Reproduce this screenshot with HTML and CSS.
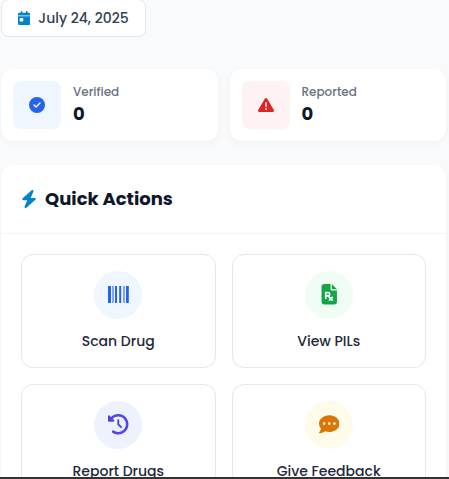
FILE: index.html
```html
<!DOCTYPE html>
<html lang="en">
<head>
<meta charset="utf-8">
<title>Dashboard</title>
<link rel="stylesheet" href="styles.css">
</head>
<body>
<main class="page">
  <div class="date">
    <svg class="date-icon" viewBox="0 0 448 512"><path d="M128 0c17.7 0 32 14.3 32 32V64H288V32c0-17.7 14.3-32 32-32s32 14.3 32 32V64h48c26.5 0 48 21.5 48 48v48H0V112C0 85.500 21.500 64 48 64H96V32c0-17.700 14.300-32 32-32zM0 192H448V464c0 26.500-21.500 48-48 48H48c-26.500 0-48-21.500-48-48V192zm80 64c-8.800 0-16 7.200-16 16v96c0 8.800 7.200 16 16 16h96c8.800 0 16-7.200 16-16V272c0-8.800-7.200-16-16-16H80z"/></svg>
    <span>July 24, 2025</span>
  </div>
  <section class="stats">
    <div class="stat">
      <div class="stat-icon blue"><svg viewBox="0 0 512 512"><path d="M256 512A256 256 0 1 0 256 0a256 256 0 1 0 0 512zM369 209L241 337c-9.400 9.400-24.600 9.400-33.900 0l-64-64c-9.400-9.400-9.400-24.600 0-33.900s24.600-9.400 33.900 0l47 47L335 175c9.400-9.400 24.600-9.400 33.900 0s9.400 24.600 0 33.900z"/></svg></div>
      <div class="stat-text"><span class="label">Verified</span><strong>0</strong></div>
    </div>
    <div class="stat">
      <div class="stat-icon red"><svg viewBox="0 0 512 512"><path d="M256 32c14.200 0 27.300 7.500 34.500 19.800l216 368c7.300 12.400 7.300 27.700 .2 40.100S486.300 480 472 480H40c-14.300 0-27.600-7.700-34.700-20.100s-7-27.800 .2-40.100l216-368C228.700 39.500 241.800 32 256 32zm0 128c-13.300 0-24 10.700-24 24V296c0 13.300 10.700 24 24 24s24-10.700 24-24V184c0-13.300-10.700-24-24-24zm32 224a32 32 0 1 0 -64 0 32 32 0 1 0 64 0z"/></svg></div>
      <div class="stat-text"><span class="label">Reported</span><strong>0</strong></div>
    </div>
  </section>
  <section class="card">
    <header class="card-head">
      <svg class="bolt" viewBox="0 0 448 512"><path d="M349.400 44.600c5.900-13.700 1.500-29.700-10.600-38.500s-28.600-8-39.900 1.800l-256 224c-10 8.800-13.600 22.900-8.900 35.300S50.700 288 64 288H175.500L98.600 467.400c-5.900 13.700-1.500 29.700 10.600 38.500s28.600 8 39.900-1.800l256-224c10-8.800 13.600-22.900 8.900-35.300s-16.600-20.700-30-20.700H272.500L349.400 44.600z"/></svg>
      <h2>Quick Actions</h2>
    </header>
    <div class="actions">
      <a class="action">
        <span class="circle blue"><svg class="wide" viewBox="0 0 21 21"><path d="M0 2h3v17H0zM7 2h2v17H7zM11.200 2h2v17h-2zM18 2h2.800v17H18z"/><path class="thin" d="M4 2h2v17H4zM15 2h2v17h-2z"/></svg></span>
        <span class="name">Scan Drug</span>
      </a>
      <a class="action">
        <span class="circle green"><svg viewBox="-64 0 512 512"><path d="M64 0C28.700 0 0 28.700 0 64V448c0 35.300 28.700 64 64 64H320c35.300 0 64-28.700 64-64V160H256c-17.700 0-32-14.300-32-32V0H64zM256 0V128H384L256 0z"/><path class="rx" d="M104 376V216h60a38 38 0 0 1 0 80H104M160 296L280 416M280 320L184 416"/></svg></span>
        <span class="name">View PILs</span>
      </a>
      <a class="action">
        <span class="circle indigo"><svg viewBox="0 0 512 512"><path d="M75 75L41 41C25.900 25.900 0 36.600 0 57.900V168c0 13.300 10.700 24 24 24H134.100c21.400 0 32.100-25.900 17-41l-30.800-30.800C155 85.500 203 64 256 64c106 0 192 86 192 192s-86 192-192 192c-40.800 0-78.600-12.700-109.700-34.400c-14.500-10.100-34.400-6.600-44.600 7.900s-6.600 34.400 7.900 44.600C151.200 495 201.700 512 256 512c141.400 0 256-114.600 256-256S397.400 0 256 0C185.300 0 121.300 28.700 75 75zm181 53c-13.300 0-24 10.700-24 24V256c0 6.400 2.500 12.500 7 17l72 72c9.400 9.400 24.600 9.400 33.900 0s9.400-24.600 0-33.900l-65-65V152c0-13.300-10.700-24-24-24z"/></svg></span>
        <span class="name">Report Drugs</span>
      </a>
      <a class="action">
        <span class="circle amber"><svg viewBox="0 0 512 512"><path d="M256 448c141.400 0 256-93.100 256-208S397.400 32 256 32S0 125.100 0 240c0 45.100 17.700 86.800 47.700 120.900c-1.900 24.500-11.400 46.300-21.400 62.900c-5.500 9.200-11.100 16.600-15.200 21.600c-2.100 2.500-3.700 4.400-4.900 5.700l-1.600 1.700c-4.600 4.600-5.900 11.400-3.400 17.400c2.500 6 8.300 9.900 14.800 9.900c28.700 0 57.600-8.900 81.600-19.300c22.900-10 42.400-21.900 54.300-30.600c31.800 11.500 67 17.900 104.100 17.900zM128 208a32 32 0 1 0 0 64 32 32 0 1 0 0-64zm128 0a32 32 0 1 0 0 64 32 32 0 1 0 0-64zm96 32a32 32 0 1 0 64 0 32 32 0 1 0-64 0z" fill-rule="evenodd"/></svg></span>
        <span class="name">Give Feedback</span>
      </a>
    </div>
  </section>
</main>
<div class="bottom-edge"></div>
</body>
</html>
```
FILE: styles.css
```css
* { box-sizing: border-box; }
html, body { height: 100%; }
body {
  margin: 0;
  overflow: hidden;
  background: #f8fafc;
  color: #0f172a;
  font-family: Poppins, Inter, "Open Sans", sans-serif;
}
svg { display: block; fill: currentColor; }
.page { width: 445px; margin-left: 1px; }

.date {
  display: flex;
  align-items: center;
  width: 145px;
  height: 38px;
  margin-top: -1px;
  padding: 0 16px;
  gap: 8px;
  background: #fff;
  border: 1px solid #e2e8f0;
  border-radius: 8px;
  color: #334155;
  font-size: 14px;
  font-weight: 500;
  white-space: nowrap;
}
.date-icon { width: 12.25px; height: 14px; color: #0284c7; flex: none; }

.stats {
  display: grid;
  grid-template-columns: 1fr 1fr;
  gap: 12px;
  margin-top: 32px;
}
.stat {
  display: flex;
  align-items: center;
  gap: 12px;
  height: 72px;
  padding: 12px;
  background: #fff;
  border-radius: 12px;
  box-shadow: 0 2px 8px rgba(0, 0, 0, .04);
}
.stat-icon {
  display: grid;
  place-items: center;
  width: 48px;
  height: 48px;
  border-radius: 8px;
}
.stat-icon svg { width: 16px; height: 16px; }
.stat-text { display: flex; flex-direction: column; gap: 2px; }
.label {
  color: #6b7280;
  font-size: 12px;
  line-height: 18px;
  font-weight: 500;
}
.stat-text strong { font-size: 18px; line-height: 22px; font-weight: 700; }
.blue { background: #eff6ff; color: #2563eb; }
.red { background: #fef2f2; color: #dc2626; }
.green { background: #f0fdf4; color: #16a34a; }
.indigo { background: #eef2ff; color: #4f46e5; }
.amber { background: #fffbeb; color: #d97706; }
.stat-text { padding-bottom: 3px; }

.card {
  margin-top: 24px;
  height: 360px;
  background: #fff;
  border-radius: 12px;
  box-shadow: 0 2px 8px rgba(0, 0, 0, .04);
}
.card-head {
  display: flex;
  align-items: center;
  gap: 8px;
  height: 69px;
  padding: 0 20px;
  border-bottom: 1px solid #f1f5f9;
}
.bolt { width: 16px; height: 18px; color: #0284c7; }
h2 { margin: 0; font-size: 18px; line-height: 28px; font-weight: 700; white-space: nowrap; }

.actions {
  display: grid;
  grid-template-columns: 1fr 1fr;
  gap: 16px;
  padding: 20px;
}
.action {
  display: flex;
  flex-direction: column;
  align-items: center;
  gap: 12px;
  height: 114px;
  padding-top: 16px;
  border: 1px solid #e2e8f0;
  border-radius: 12px;
}
.circle {
  display: grid;
  place-items: center;
  width: 48px;
  height: 48px;
  padding-bottom: 1px;
  border-radius: 50%;
}
.circle svg { width: 20.5px; height: 20.5px; }
.circle .wide { width: 21px; height: 21px; }
.thin { opacity: .55; }
.rx { fill: none; stroke: #f0fdf4; stroke-width: 40; }
.name {
  color: #1e293b;
  font-size: 14px;
  line-height: 21px;
  font-weight: 500;
  white-space: nowrap;
}
.bottom-edge {
  position: fixed;
  inset: auto 0 0 0;
  height: 2px;
  background: #333;
}
```
